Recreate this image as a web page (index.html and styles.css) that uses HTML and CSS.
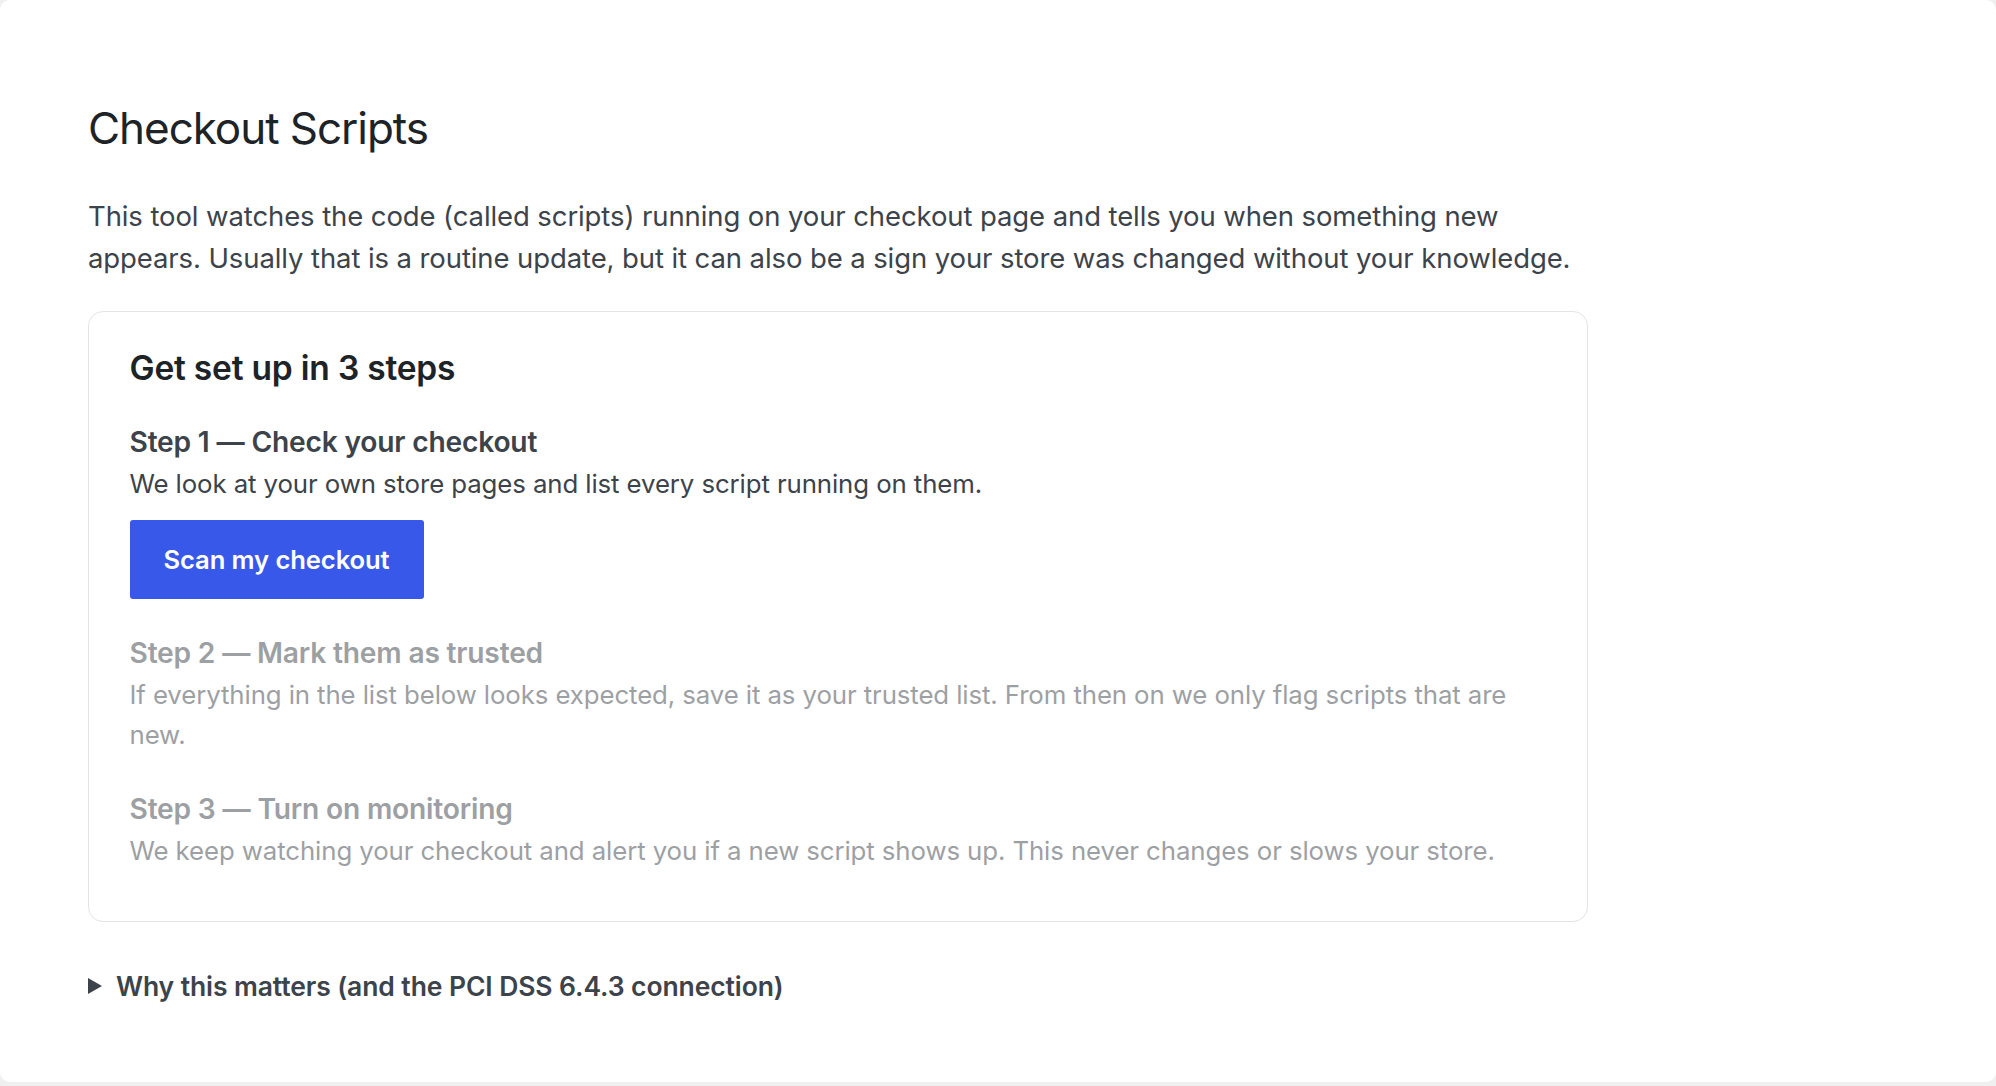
FILE: index.html
```html
<!DOCTYPE html>
<html lang="en">
<head>
<meta charset="utf-8">
<title>Checkout Scripts</title>
<link rel="stylesheet" href="styles.css">
</head>
<body>
<div class="panel">
  <main class="content">
    <h1 class="page-title">Checkout Scripts</h1>
    <p class="intro">This tool watches the code (called scripts) running on your checkout page and tells you when something new appears. Usually that is a routine update, but it can also be a sign your store was changed without your knowledge.</p>

    <section class="card">
      <h2 class="card-title">Get set up in 3 steps</h2>

      <div class="step">
        <h3 class="step-title">Step 1 — Check your checkout</h3>
        <p class="step-desc">We look at your own store pages and list every script running on them.</p>
        <button class="btn-primary" type="button">Scan my checkout</button>
      </div>

      <div class="step step-disabled">
        <h3 class="step-title">Step 2 — Mark them as trusted</h3>
        <p class="step-desc">If everything in the list below looks expected, save it as your trusted list. From then on we only flag scripts that are new.</p>
      </div>

      <div class="step step-disabled">
        <h3 class="step-title">Step 3 — Turn on monitoring</h3>
        <p class="step-desc">We keep watching your checkout and alert you if a new script shows up. This never changes or slows your store.</p>
      </div>
    </section>

    <details class="why">
      <summary class="why-summary"><span class="why-arrow"></span>Why this matters (and the PCI DSS 6.4.3 connection)</summary>
    </details>
  </main>
</div>
</body>
</html>
```

FILE: styles.css
```css
* { box-sizing: border-box; }

html, body {
  margin: 0;
  padding: 0;
}

body {
  background: #f0f0f1;
  font-family: Inter, "Noto Sans", "Liberation Sans", sans-serif;
  color: #3c434a;
}

.panel {
  background: #ffffff;
  height: calc(100vh - 4px);
  border-radius: 10px;
  overflow: hidden;
}

.content {
  padding: 101px 0 0 88px;
}

.page-title {
  margin: 0;
  font-size: 44px;
  line-height: 54px;
  font-weight: 400;
  color: #1d2327;
  letter-spacing: -1.05px;
}

.intro {
  margin: 40px 0 0;
  max-width: 1505px;
  font-size: 27.5px;
  line-height: 42px;
  color: #3c434a;
  letter-spacing: -0.1px;
}

.card {
  width: 1500px;
  margin-top: 32px;
  border: 1.5px solid #e2e4e7;
  border-radius: 15px;
  padding: 36px 40px 50px 40.5px;
}

.card-title {
  margin: 0;
  font-size: 33.5px;
  line-height: 40px;
  font-weight: 600;
  color: #1d2327;
  letter-spacing: -0.2px;
}

.step {
  margin-top: 36px;
}

.step-title {
  margin: 0;
  font-size: 28.2px;
  line-height: 36px;
  font-weight: 600;
  color: #3c434a;
  letter-spacing: -0.2px;
}

.step-desc {
  margin: 4px 0 0;
  font-size: 25.8px;
  line-height: 40px;
  color: #3c434a;
  letter-spacing: -0.1px;
}

.step-disabled {
  opacity: 0.5;
}

.btn-primary {
  margin-top: 16px;
  display: inline-block;
  width: 294px;
  height: 79px;
  background: #3858e9;
  color: #ffffff;
  border: none;
  border-radius: 3px;
  font-family: inherit;
  font-size: 25.6px;
  font-weight: 600;
  letter-spacing: -0.1px;
  cursor: pointer;
}

.why {
  margin-top: 46px;
}

.why-summary {
  list-style: none;
  display: flex;
  align-items: center;
  gap: 14px;
  font-size: 26.5px;
  line-height: 36px;
  font-weight: 600;
  color: #3c434a;
  letter-spacing: -0.1px;
  cursor: pointer;
}

.why-summary::-webkit-details-marker { display: none; }

.why-arrow {
  width: 0;
  height: 0;
  border-left: 14px solid #3c434a;
  border-top: 8.5px solid transparent;
  border-bottom: 8.5px solid transparent;
}
```
